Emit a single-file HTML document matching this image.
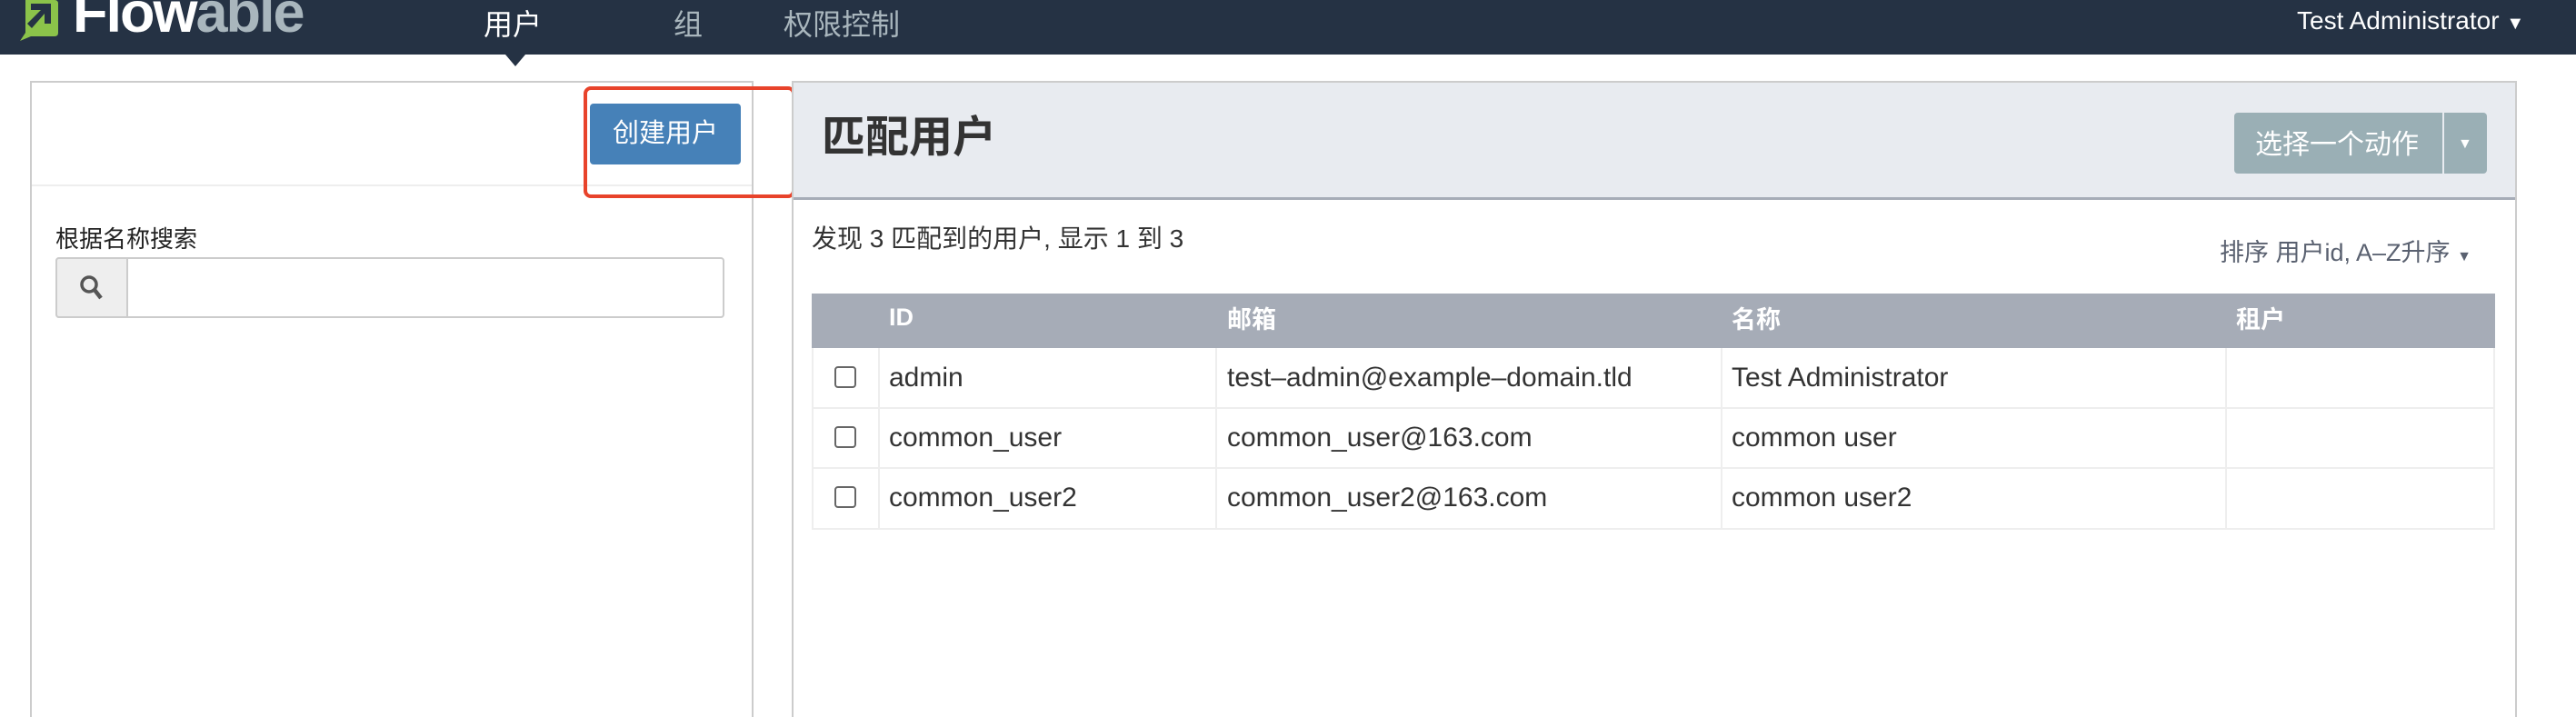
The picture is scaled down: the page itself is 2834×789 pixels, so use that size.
<!DOCTYPE html>
<html><head><meta charset="utf-8"><style>
*{box-sizing:border-box;margin:0;padding:0}
body{width:2834px;height:746px;background:#fff;position:relative;overflow:hidden;font-family:"Liberation Sans","Noto Sans CJK SC",sans-serif;color:#333}
.a{position:absolute;white-space:nowrap}
.r{font-size:30px;color:#333}
.h{font-size:27px;color:#fff;font-weight:bold;top:330px}
.v{top:383px;width:2px;height:200px;background:#eee}
.cb{left:918px;width:24px;height:24px;border:2px solid #666;border-radius:4px;background:#fff}
</style></head><body>
<div class="a" style="left:0;top:0;width:2834px;height:60px;background:#253244"></div>
<svg class="a" style="left:20px;top:0" width="46" height="46" viewBox="0 0 46 46">
<path d="M8 0H40Q44 0 44 4V36Q44 40 40 40H14L2 45L8 36V0Z" fill="#8bc34a"/>
<path d="M14 4H36V26H29V15L15 31L10 26L25 11H14Z" fill="#253244"/>
</svg>
<div class="a" style="left:80px;top:-22px;font-size:63px;font-weight:bold;letter-spacing:-2px;color:#fff">Flow<span style="color:#a9b6bd">able</span></div>
<div class="a" style="left:532px;top:2px;font-size:32px;color:#fff">用户</div>
<div class="a" style="left:556px;top:60px;width:0;height:0;border-left:11px solid transparent;border-right:11px solid transparent;border-top:13px solid #253244"></div>
<div class="a" style="left:741px;top:2px;font-size:32px;color:#a9b6bd">组</div>
<div class="a" style="left:862px;top:2px;font-size:32px;color:#a9b6bd">权限控制</div>
<div class="a" style="left:2527px;top:7px;font-size:28px;color:#fff">Test Administrator <span style="font-size:20px">▼</span></div>

<div class="a" style="left:33px;top:89px;width:796px;height:700px;border:2px solid #ccc;border-bottom:none"></div>
<div class="a" style="left:35px;top:203px;width:792px;height:2px;background:#eee"></div>
<div class="a" style="left:649px;top:114px;width:166px;height:67px;background:#4681b8;border-radius:4px;color:#fff;font-size:29px;line-height:67px;text-align:center">创建用户</div>
<div class="a" style="left:642px;top:95px;width:233px;height:123px;border:4px solid #e8432b;border-radius:8px"></div>
<div class="a" style="left:61px;top:243px;font-size:26px;color:#222">根据名称搜索</div>
<div class="a" style="left:61px;top:283px;width:736px;height:67px;border:2px solid #ccc;border-radius:4px"></div>
<div class="a" style="left:61px;top:283px;width:80px;height:67px;border:2px solid #ccc;border-radius:4px 0 0 4px;background:#eee"></div>
<svg class="a" style="left:87px;top:302px" width="28" height="30" viewBox="0 0 28 30"><circle cx="11" cy="11" r="8" fill="none" stroke="#555" stroke-width="3.5"/><path d="M17 17L24 26" stroke="#555" stroke-width="4.5"/></svg>

<div class="a" style="left:871px;top:89px;width:1898px;height:700px;border:2px solid #ccc;border-bottom:none"></div>
<div class="a" style="left:873px;top:91px;width:1894px;height:129px;background:#e8ebf0;border-bottom:3px solid #a6acb7"></div>
<div class="a" style="left:904px;top:111px;font-size:48px;font-weight:bold;color:#333">匹配用户</div>
<div class="a" style="left:2458px;top:124px;width:278px;height:67px;background:#9aafb5;border-radius:4px"></div>
<div class="a" style="left:2687px;top:124px;width:2px;height:67px;background:#e8ebf0"></div>
<div class="a" style="left:2481px;top:134px;font-size:30px;color:#fff">选择一个动作</div>
<div class="a" style="left:2704px;top:150px;font-size:16px;color:#fff">▼</div>
<div class="a" style="left:893px;top:241px;font-size:28px;color:#333">发现 3 匹配到的用户, 显示 1 到 3</div>
<div class="a" style="left:2442px;top:256px;font-size:27px;color:#5a6170">排序 用户id, A–Z升序 <span style="font-size:16px">▼</span></div>

<div class="a" style="left:893px;top:323px;width:1852px;height:60px;background:#a6acb7"></div>
<div class="a h" style="left:978px;top:334px">ID</div>
<div class="a h" style="left:1350px">邮箱</div>
<div class="a h" style="left:1905px">名称</div>
<div class="a h" style="left:2460px">租户</div>
<div class="a" style="left:893px;top:383px;width:1852px;height:200px;border:2px solid #eee;border-top:none"></div>
<div class="a" style="left:893px;top:448px;width:1852px;height:2px;background:#eee"></div>
<div class="a" style="left:893px;top:514px;width:1852px;height:2px;background:#eee"></div>
<div class="a v" style="left:966px"></div>
<div class="a v" style="left:1337px"></div>
<div class="a v" style="left:1893px"></div>
<div class="a v" style="left:2448px"></div>
<div class="a cb" style="top:403px"></div>
<div class="a cb" style="top:469px"></div>
<div class="a cb" style="top:535px"></div>
<div class="a r" style="left:978px;top:399px">admin</div>
<div class="a r" style="left:1350px;top:399px">test–admin@example–domain.tld</div>
<div class="a r" style="left:1905px;top:399px">Test Administrator</div>
<div class="a r" style="left:978px;top:465px">common_user</div>
<div class="a r" style="left:1350px;top:465px">common_user@163.com</div>
<div class="a r" style="left:1905px;top:465px">common user</div>
<div class="a r" style="left:978px;top:531px">common_user2</div>
<div class="a r" style="left:1350px;top:531px">common_user2@163.com</div>
<div class="a r" style="left:1905px;top:531px">common user2</div>
</body></html>
